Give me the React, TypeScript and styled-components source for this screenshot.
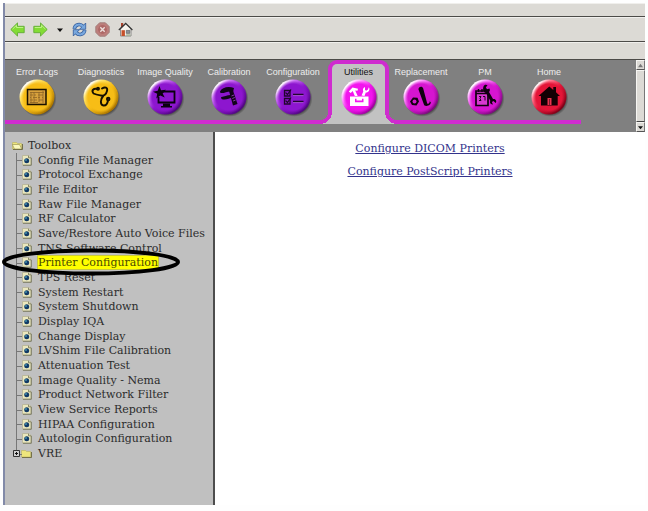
import React from "react";
import styled, { createGlobalStyle } from "styled-components";

const MAGENTA = "#cf2bcf";
const SERIF = '"DejaVu Serif", "Liberation Serif", serif';
const SANS = '"Liberation Sans", Arial, sans-serif';

const GlobalStyle = createGlobalStyle`
  *, *::before, *::after { box-sizing: border-box; }
  body { margin: 0; background: #fefefe; }
  ul { list-style: none; margin: 0; padding: 0; }
  button { border: 0; padding: 0; margin: 0; background: none; cursor: pointer; }
  svg { display: block; }
`;

const Page = styled.div`
  display: flex;
  min-height: 100vh;
  padding: 3px 3px 6px;
`;

const Window = styled.div`
  display: flex;
  flex: 1;
  flex-direction: column;
  min-width: 0;
  border-left: 2px solid #828aa8;
`;

const Bar = styled.div<{ $height: number }>`
  display: flex;
  align-items: center;
  gap: 8px;
  height: ${(p) => p.$height}px;
  padding-left: 5px;
  background: #dcdad5;
  border-top: 1px solid #f0efec;
  border-bottom: 1px solid #4c4b48;
`;

const ToolButton = styled.button<{ $narrow?: boolean }>`
  display: flex;
  align-items: center;
  justify-content: center;
  width: ${(p) => (p.$narrow ? 8 : 15)}px;
  height: 16px;
`;

const Header = styled.header`
  display: flex;
  height: 72px;
  background: #808080;
`;

const TabList = styled.nav`
  display: flex;
  flex: 1;
  height: 64px;
`;

const Tab = styled.button<{ $active?: boolean }>`
  position: relative;
  display: flex;
  flex-direction: column;
  align-items: center;
  flex: none;
  width: ${(p) => (p.$active ? 61 : 64)}px;
  margin-left: ${(p) => (p.$active ? 3 : 0)}px;
  padding-top: ${(p) => (p.$active ? 3 : 7)}px;
  font: 9px/10px ${SANS};
  white-space: nowrap;
  color: ${(p) => (p.$active ? "#111" : "#eee")};
  background: ${(p) => (p.$active ? "#c2c2c2" : "transparent")};
  border: solid ${MAGENTA};
  border-width: ${(p) => (p.$active ? "4px 4px 0" : "0 0 4px")};
  border-radius: ${(p) => (p.$active ? "9px 9px 0 0" : "0")};
  z-index: ${(p) => (p.$active ? 1 : 0)};

  &::before,
  &::after {
    content: "";
    display: ${(p) => (p.$active ? "block" : "none")};
    position: absolute;
    bottom: 0;
    width: 12px;
    height: 12px;
  }
  &::before {
    left: -12px;
    background: radial-gradient(circle at 0 0, #808080 8px, ${MAGENTA} 8px 12px, #c2c2c2 12px);
  }
  &::after {
    right: -12px;
    background: radial-gradient(circle at 100% 0, #808080 8px, ${MAGENTA} 8px 12px, #c2c2c2 12px);
  }
`;

const ScrollBar = styled.div`
  display: flex;
  flex-direction: column;
  width: 9px;
  background: #d6d4cf;
`;

const ScrollButton = styled.button`
  display: flex;
  align-items: center;
  justify-content: center;
  height: 10px;
  background: #dcdad5;
  border: 1px solid #f6f5f2;
  border-right-color: #777;
  border-bottom-color: #555;
`;

const ScrollThumb = styled.div`
  flex: 1;
  background: #dcdad5;
  border: 1px solid #f6f5f2;
  border-right-color: #777;
  border-bottom-color: #444;
`;

const Body = styled.div`
  display: flex;
  flex: 1;
`;

const Sidebar = styled.aside`
  flex: none;
  width: 210px;
  padding: 6px 0 0 7px;
  background: #c0c0c0;
  border-right: 2px solid #4d4d4d;
`;

const Tree = styled.ul`
  display: grid;
  grid-auto-rows: 1fr;
  min-height: 323px;
`;

const TreeItem = styled.li`
  position: relative;
  display: flex;
  align-items: center;
`;

const Branch = styled.span<{ $kind: "root" | "leaf" | "folder" }>`
  position: relative;
  display: flex;
  align-items: center;
  align-self: stretch;
  flex: none;
  justify-content: flex-end;
  width: ${(p) => (p.$kind === "root" ? 11 : 20)}px;
  margin-right: ${(p) => (p.$kind === "root" ? 5 : 6)}px;

  &::before {
    content: "";
    display: ${(p) => (p.$kind === "root" ? "none" : "block")};
    position: absolute;
    left: 4px;
    top: 0;
    bottom: ${(p) => (p.$kind === "folder" ? "50%" : "0")};
    border-left: 1px solid #777;
  }
  &::after {
    content: "";
    display: ${(p) => (p.$kind === "root" ? "none" : "block")};
    position: absolute;
    left: 4px;
    top: 50%;
    width: 6px;
    border-top: 1px solid #777;
  }
`;

const Expander = styled.button`
  position: absolute;
  z-index: 1;
  left: 1px;
  width: 7px;
  height: 7px;
`;

const TreeLink = styled.a<{ $selected?: boolean }>`
  font: 11px/13px ${SERIF};
  white-space: nowrap;
  text-decoration: none;
  color: ${(p) => (p.$selected ? "#4a4a00" : "#2c2c2c")};
  background: ${(p) => (p.$selected ? "#ffff00" : "transparent")};
  outline: ${(p) => (p.$selected ? "1px solid #c9c93c" : "none")};
`;

const Ring = styled.svg`
  position: absolute;
  z-index: 2;
  left: -11px;
  top: -7px;
  pointer-events: none;
`;

const Content = styled.main`
  display: flex;
  flex: 1;
  flex-direction: column;
  align-items: center;
  gap: 9px;
  padding-top: 10px;
  background: #fff;
`;

const ContentLink = styled.a`
  font: 11px/14px ${SERIF};
  color: #33338c;
  text-decoration: underline;
`;

function ArrowIcon({ flip }: { flip?: boolean }) {
  return (
    <svg width="15" height="15" viewBox="0 0 15 15">
      <g transform={flip ? "matrix(-1 0 0 1 15 0)" : undefined}>
        <path
          d="M.8 7.500 7.500.9v3.400h6.700v6.400H7.500v3.400Z"
          fill="#83dc35"
          stroke="#62ad35"
          strokeWidth=".9"
          strokeLinejoin="round"
        />
        <path d="M2.500 7.200 6.500 3.300v2.200h6.700" fill="none" stroke="#bdf285" />
      </g>
    </svg>
  );
}

function RefreshIcon() {
  return (
    <svg width="15" height="15" viewBox="0 0 15 15">
      <g fill="none" stroke="#315b9b" strokeWidth="3.600">
        <path d="M2.300 7C2.800 2.200 8.300 1.200 11 4.500" />
        <path d="M12.700 8C12.200 12.800 6.700 13.800 4 10.500" />
      </g>
      <path d="M13.700 1v6.300H7.500ZM1.300 14V7.700h6.200Z" fill="#79a8de" stroke="#315b9b" strokeWidth=".8" />
      <g fill="none" stroke="#79a8de" strokeWidth="2.100">
        <path d="M2.300 6.600C2.800 2.200 8.300 1.200 11 4.500" />
        <path d="M12.700 8.400C12.200 12.800 6.700 13.800 4 10.500" />
      </g>
    </svg>
  );
}

function StopIcon() {
  return (
    <svg width="15" height="15" viewBox="0 0 15 15">
      <path d="M4.600.8h5.800l3.800 3.800v5.800l-3.800 3.800H4.600L.8 10.400V4.600Z" fill="#bd7e7b" stroke="#a3807d" />
      <circle cx="7.500" cy="7.500" r="4.400" fill="#ae6967" />
      <path d="m5.300 5.300 4.400 4.400m0-4.400L5.300 9.700" stroke="#ecdedb" strokeWidth="1.400" />
    </svg>
  );
}

function HomeIcon() {
  return (
    <svg width="15" height="15" viewBox="0 0 15 15">
      <path d="M3 1h2.200v4H3z" fill="#a8422c" />
      <path d="M2.500 7 7.800 2 13 7v7H2.500Z" fill="#f5f3ee" stroke="#777" strokeWidth=".8" />
      <path d="M.8 8 7.700 1.400 14.400 8" fill="none" stroke="#333" strokeWidth="1.200" />
      <path d="M3.500 8.200h3.400V14H3.500z" fill="#c6502a" />
      <path d="M8.300 8.400h3.500v3H8.300z" fill="#8b9199" stroke="#555" strokeWidth=".6" />
      <path d="M8.200 12.200h4.200V14H8.200z" fill="#a9b59c" />
    </svg>
  );
}

function Triangle({ up, size, color }: { up?: boolean; size: number; color: string }) {
  return (
    <svg width={size} height={size} viewBox="0 0 6 6">
      <path d={up ? "M0 5h6L3 1Z" : "M0 1.400h6L3 5Z"} fill={color} />
    </svg>
  );
}

const BALLS = {
  yellow: ["#ffe36a", "#f7bd16", "#a87300"],
  purple: ["#cf7cf5", "#8d16cf", "#4f0680"],
  pink: ["#ff9dff", "#d615d0", "#7c0a7c"],
  hot: ["#ffb0ff", "#f314ee", "#a000a0"],
  red: ["#ff8095", "#e41538", "#7d0016"],
};
type BallColor = keyof typeof BALLS;

function Ball({ id, color, children }: { id: string; color: BallColor; children: React.ReactNode }) {
  const [light, mid, dark] = BALLS[color];
  return (
    <svg width="40" height="40" viewBox="0 0 40 40">
      <defs>
        <linearGradient id={id} x1=".15" y1=".15" x2=".85" y2=".85">
          <stop offset="0" stopColor="#fff" />
          <stop offset=".18" stopColor={light} />
          <stop offset=".5" stopColor={mid} />
          <stop offset="1" stopColor={dark} />
        </linearGradient>
        <radialGradient id={`${id}-shadow`}>
          <stop offset=".84" stopColor="#222" stopOpacity=".6" />
          <stop offset="1" stopColor="#222" stopOpacity="0" />
        </radialGradient>
        <radialGradient id={`${id}-face`}>
          <stop offset=".8" stopColor={mid} />
          <stop offset="1" stopColor={mid} stopOpacity="0" />
        </radialGradient>
      </defs>
      <circle cx="21.300" cy="21.500" r="18.300" fill={`url(#${id}-shadow)`} />
      <circle cx="20" cy="20" r="17.500" fill={`url(#${id})`} />
      <circle cx="20" cy="20" r="16.300" fill={`url(#${id}-face)`} />
      {children}
    </svg>
  );
}

const LogGlyph = (
  <g>
    <path d="M10.500 12.500h18.500v15H10.500z" fill="#d7a13c" stroke="#1a1200" strokeWidth="1.500" />
    <path
      d="M13 15.500h14M13 18h3m1 0h2m2 0h5M13 20.500h1m2 0h4m1 0h2m2 0h1M13 23h3m1 0h3m2 0h4M13 25.500h8M14 15v11m3-11v11m5-11v10m4-11v12"
      stroke="#8d6526"
      strokeWidth=".8"
    />
  </g>
);

const StethoscopeGlyph = (
  <g fill="none" stroke="#160f00" strokeWidth="1.900" strokeLinecap="round">
    <path d="M12.500 16.500c-2.500-3 0-5.500 4-4.500M21 11.500c3-2 6-1 5 2.500-.8 3-3 5-6 4.500-2.500-.4-5-.7-7.500-2M22.500 18.500c-3.500 4-3.500 9.500 0 10 3 .3 4-2 4.500-5" />
    <circle cx="17" cy="11.800" r="1" fill="#160f00" />
    <circle cx="27.200" cy="22" r="1.300" />
  </g>
);

const MonitorGlyph = (
  <g>
    <path d="M18 14.500h11.500v11h-16V20" fill="none" stroke="#0b0010" strokeWidth="1.800" />
    <path d="M18 26.500h7V29h2v1.500H16V29h2Z" fill="#0b0010" />
    <path d="m14.500 9 1.500 4.200 5-.5-3.300 3.700 2 4.200-4.400-2.200-4 3.200.9-4.900-4.200-2 4.700-.9Z" fill="#0b0010" />
  </g>
);

const CaliperGlyph = (
  <g fill="#11041a">
    <path d="M11 14.500c2-4 8-5.500 14-3.500l-1 4c-4-2-8 1.500-12.500 1ZM12 20c3 .5 7-3 12.500-1.500l-.6 2.300c-4 0-7 3-11.400 1.200Z" />
    <path d="m19.500 12 4 0 5 15-4.500 1.500Z" />
    <path d="m22.500 19 2.500-1m-1.700 3.500 2.500-1m-1.700 3.500 2.500-1" stroke="#a348c8" strokeWidth=".8" />
  </g>
);

const ChecklistGlyph = (
  <g fill="none" stroke="#21062e" strokeWidth="1.300">
    <path d="M11.500 13.500H17V19h-5.500ZM11.500 21.500H17V27h-5.500ZM20 17.500h10.500M20 24.500h10.500" />
    <path d="m12.500 15.500 2 2 3.500-5m-5.500 11 2 2 3.500-5" />
    <path d="M20 18.600h10.500M20 25.600h10.500" stroke="#c57be5" strokeWidth=".6" />
  </g>
);

const ToolboxGlyph = (
  <g fill="#fff">
    <path fillRule="evenodd" d="M11 19.500h18.500v9.500H11Zm5 2.300v3.400h8.500v-3.400h-1.500v1.700h-5.500v-1.700Z" />
    <path d="m9.800 14.500 3.700-4 5.500 1.300-.5 2-2.300-.3 2.500 5.500h-2.900L13.700 14l-2 2ZM22.500 18.500l1.800-4c-1-2 0-4 1.700-4.500v3l1.300.7L29 12.500l.8-2.300c1.700 2-.2 5.500-3 5.300L25.500 19Z" />
  </g>
);

const ReplacementGlyph = (
  <g>
    <path d="m12 20.500 4.500.3 1.500 3.700-2.500 4-4.500-.5-2-3.500Z" fill="#10000f" />
    <circle cx="13.500" cy="24.500" r="2" fill="#cf19ca" />
    <path d="M17.500 12.500c-.4-3 4-4 4.700-1l4 15c1.200 1 3-.7 2.200-2l1.300.5c.6 3-4 5-6.500 3.200Z" fill="#10000f" />
  </g>
);

const MaintenanceGlyph = (
  <g>
    <path d="M11 14h12v14.500H11Z" fill="#d838d2" stroke="#10000f" strokeWidth="1.700" />
    <path d="M13.500 12v3m3.500-3v3m3.500-3v3M11 16.500h12" stroke="#10000f" strokeWidth="1.400" />
    <path d="M14 19.500h2l-1 2 1 2h-2m4-4h2v4" fill="none" stroke="#10000f" strokeWidth=".9" />
    <path
      d="M18.500 9.500c.5-2 3-2.500 4-1l-1.700 1.700 1.200 2 2.500-.7c.7 2 .3 2.600-.5 3.500l4 7c3-.5 4 2.500 2.700 4l-2.300-2-1.500 1 1 2.500c-2.500.3-3.500-2-2.600-3.700L21 16c-2.500-.6-3.500-3.500-2.500-6.500Z"
      fill="#10000f"
    />
  </g>
);

const HouseGlyph = (
  <g fill="#140004">
    <path d="m9.500 19 10.800-9.500 4 3.500v-3H27v5.300l4 3.700h-2.300v9.500H12V19Z" />
    <path d="M18.500 21h4v7h-4Z" fill="#e8334f" />
    <path d="M20.500 22v6" stroke="#7c1c2d" />
  </g>
);

const TABS: { label: string; color: BallColor; glyph: React.ReactNode; active?: boolean }[] = [
  { label: "Error Logs", color: "yellow", glyph: LogGlyph },
  { label: "Diagnostics", color: "yellow", glyph: StethoscopeGlyph },
  { label: "Image Quality", color: "purple", glyph: MonitorGlyph },
  { label: "Calibration", color: "purple", glyph: CaliperGlyph },
  { label: "Configuration", color: "purple", glyph: ChecklistGlyph },
  { label: "Utilities", color: "hot", glyph: ToolboxGlyph, active: true },
  { label: "Replacement", color: "pink", glyph: ReplacementGlyph },
  { label: "PM", color: "pink", glyph: MaintenanceGlyph },
  { label: "Home", color: "red", glyph: HouseGlyph },
];

const TOOLS = [
  "Config File Manager",
  "Protocol Exchange",
  "File Editor",
  "Raw File Manager",
  "RF Calculator",
  "Save/Restore Auto Voice Files",
  "TNS Software Control",
  "Printer Configuration",
  "TPS Reset",
  "System Restart",
  "System Shutdown",
  "Display IQA",
  "Change Display",
  "LVShim File Calibration",
  "Attenuation Test",
  "Image Quality - Nema",
  "Product Network Filter",
  "View Service Reports",
  "HIPAA Configuration",
  "Autologin Configuration",
];

function FolderIcon({ open }: { open?: boolean }) {
  return (
    <svg width="11" height="9" viewBox="0 0 11 9">
      <path d="M.5 1.500h4l1 1h4V8H.5Z" fill="#eee67c" stroke="#b9b160" strokeWidth=".6" />
      {open && <path d="M.3 3.500h7.200L9.800 8H2.500Z" fill="#fbf8bd" stroke="#8f8848" strokeWidth=".6" />}
      <path d="M1 8.500h9.500V3" fill="none" stroke="#6c683c" strokeWidth=".9" />
    </svg>
  );
}

function PageIcon() {
  return (
    <svg width="10" height="11" viewBox="0 0 10 11">
      <path d="M.5.5h6.500l2 2V10H.5Z" fill="#ebe8bd" stroke="#b5b394" strokeWidth=".8" />
      <path d="M9.300 3v7.300H1M6.500.8v2h2.600" fill="none" stroke="#6d6d52" strokeWidth=".8" />
      <circle cx="4.700" cy="5.700" r="2.500" fill="#123a66" />
      <circle cx="4" cy="5" r="1" fill="#3f8fae" />
    </svg>
  );
}

export default function App() {
  return (
    <>
      <GlobalStyle />
      <Page>
        <Window>
          <Bar $height={14} />
          <Bar $height={25}>
            <ToolButton aria-label="Back"><ArrowIcon /></ToolButton>
            <ToolButton aria-label="Forward"><ArrowIcon flip /></ToolButton>
            <ToolButton aria-label="History" $narrow><Triangle size={6} color="#111" /></ToolButton>
            <ToolButton aria-label="Reload"><RefreshIcon /></ToolButton>
            <ToolButton aria-label="Stop"><StopIcon /></ToolButton>
            <ToolButton aria-label="Home page"><HomeIcon /></ToolButton>
          </Bar>
          <Bar $height={18} />
          <Header>
            <TabList>
              {TABS.map((tab, i) => (
                <Tab key={tab.label} $active={tab.active}>
                  {tab.label}
                  <Ball id={`ball-${i}`} color={tab.color}>{tab.glyph}</Ball>
                </Tab>
              ))}
            </TabList>
            <ScrollBar>
              <ScrollButton aria-label="Scroll up"><Triangle up size={5} color="#777" /></ScrollButton>
              <ScrollThumb />
              <ScrollButton aria-label="Scroll down"><Triangle size={5} color="#111" /></ScrollButton>
            </ScrollBar>
          </Header>
          <Body>
            <Sidebar>
              <Tree>
                <TreeItem>
                  <Branch $kind="root"><FolderIcon open /></Branch>
                  <TreeLink href="#toolbox">Toolbox</TreeLink>
                </TreeItem>
                {TOOLS.map((name) => {
                  const selected = name === "Printer Configuration";
                  return (
                    <TreeItem key={name}>
                      <Branch $kind="leaf"><PageIcon /></Branch>
                      <TreeLink href="#tool" $selected={selected}>{name}</TreeLink>
                      {selected && (
                        <Ring width="180" height="28" viewBox="0 0 180 28">
                          <ellipse cx="90" cy="14" rx="87" ry="11.500" fill="none" stroke="#000" strokeWidth="4" />
                        </Ring>
                      )}
                    </TreeItem>
                  );
                })}
                <TreeItem>
                  <Expander aria-label="Expand VRE">
                    <svg width="7" height="7" viewBox="0 0 7 7">
                      <path d="M.5.5h6v6h-6Z" fill="#d0d0d0" stroke="#333" />
                      <path d="M2 3.500h3M3.500 2v3" stroke="#111" />
                    </svg>
                  </Expander>
                  <Branch $kind="folder"><FolderIcon /></Branch>
                  <TreeLink href="#vre">VRE</TreeLink>
                </TreeItem>
              </Tree>
            </Sidebar>
            <Content>
              <ContentLink href="#dicom">Configure DICOM Printers</ContentLink>
              <ContentLink href="#postscript">Configure PostScript Printers</ContentLink>
            </Content>
          </Body>
        </Window>
      </Page>
    </>
  );
}
